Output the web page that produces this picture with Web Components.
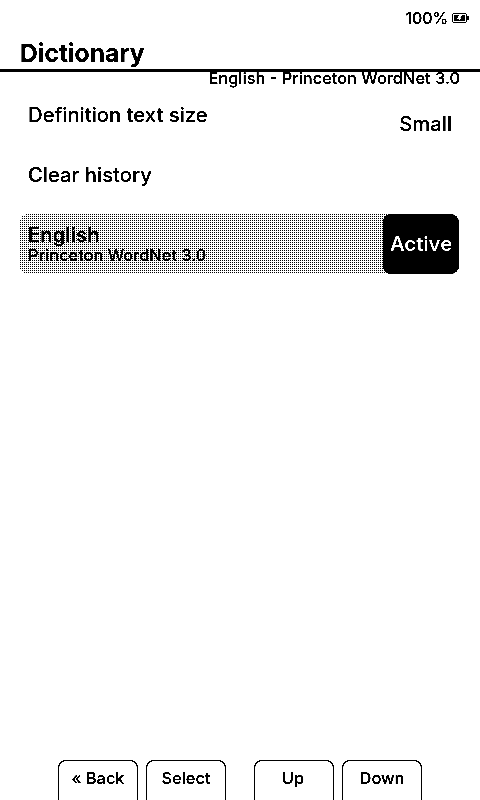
<!DOCTYPE html>
<html>
<head>
<meta charset="utf-8">
<title>Dictionary</title>
<style>
  html, body { margin: 0; padding: 0; background: #fff; }
  body { font-family: Inter, "Liberation Sans", sans-serif; font-weight: 500; color: #000; filter: grayscale(1) brightness(.8) contrast(10); }
</style>
</head>
<body>
<reader-screen>
  <status-bar slot="status" level="100%"></status-bar>
  <screen-header slot="header" title="Dictionary" subtitle="English - Princeton WordNet 3.0"></screen-header>
  <setting-row label="Definition text size" value="Small"></setting-row>
  <setting-row label="Clear history"></setting-row>
  <dict-row name="English" source="Princeton WordNet 3.0" state="Active"></dict-row>
  <hint-bar slot="hints"></hint-bar>
</reader-screen>

<script>
customElements.define('reader-screen', class extends HTMLElement {
  constructor() {
    super();
    const shadowRoot = this.attachShadow({ mode: 'open' });
    shadowRoot.innerHTML = `
      <style>
        :host {
          display: flex;
          flex-direction: column;
          width: 480px;
          height: 800px;
          overflow: hidden;
        }
        main {
          flex: 1;
          display: flex;
          flex-direction: column;
        }
      </style>
      <slot name="status"></slot>
      <slot name="header"></slot>
      <main><slot></slot></main>
      <slot name="hints"></slot>
    `;
  }
});

customElements.define('status-bar', class extends HTMLElement {
  constructor() {
    super();
    const shadowRoot = this.attachShadow({ mode: 'open' });
    shadowRoot.innerHTML = `
      <style>
        :host {
          display: flex;
          justify-content: flex-end;
          align-items: center;
          gap: 4px;
          height: 20px;
          padding: 8px 11px 0 0;
          font-size: 16px;
          letter-spacing: -0.2px;
        }
        svg { display: block; }
      </style>
      <span>${this.getAttribute('level')}</span>
      <svg width="17" height="10" viewBox="0 0 17 10">
        <rect x="0.5" y="0.5" width="14" height="9" rx="1" fill="#fff" stroke="#000"/>
        <rect x="2" y="2" width="11" height="6" fill="#000"/>
        <path d="M15 3h1.5v4H15z" fill="#000"/>
        <path d="M11 2H7L5 6h2L6 8l4-3.5H8z" fill="#fff"/>
      </svg>
    `;
  }
});

customElements.define('screen-header', class extends HTMLElement {
  constructor() {
    super();
    const shadowRoot = this.attachShadow({ mode: 'open' });
    shadowRoot.innerHTML = `
      <style>
        :host { display: block; }
        h1 {
          margin: 0;
          padding: 9px 0 0 20px;
          height: 32px;
          font-size: 24.6px;
          line-height: 33px;
          font-weight: 700;
          border-bottom: 3px solid #000;
        }
        p {
          margin: 0;
          padding-right: 20px;
          height: 17px;
          text-align: right;
          font-size: 16.4px;
          line-height: 13px;
        }
      </style>
      <h1>${this.getAttribute('title')}</h1>
      <p>${this.getAttribute('subtitle')}</p>
    `;
  }
});

customElements.define('setting-row', class extends HTMLElement {
  constructor() {
    super();
    const shadowRoot = this.attachShadow({ mode: 'open' });
    const value = this.getAttribute('value');
    shadowRoot.innerHTML = `
      <style>
        :host {
          display: flex;
          justify-content: space-between;
          height: 60px;
          padding: 0 28px;
          font-size: 20.3px;
        }
        span { display: block; line-height: 32px; padding-top: 10px; }
        .value { padding-top: 19px; }
      </style>
      <span>${this.getAttribute('label')}</span>
      ${value ? `<span class="value">${value}</span>` : ''}
    `;
  }
});

customElements.define('dict-row', class extends HTMLElement {
  constructor() {
    super();
    const shadowRoot = this.attachShadow({ mode: 'open' });
    shadowRoot.innerHTML = `
      <style>
        :host {
          display: flex;
          align-items: stretch;
          height: 60px;
          margin: 5px 21px 0 20px;
          border-radius: 8px;
          overflow: hidden;
          background: conic-gradient(#000 25%, #fff 0) -1px 0 / 2px 2px;
        }
        .text { flex: 1; padding: 10px 0 0 8px; }
        .name { font-size: 20.3px; line-height: 22px; font-weight: 600; }
        .source { font-size: 16.4px; line-height: 18px; }
        .state {
          display: flex;
          align-items: center;
          justify-content: center;
          width: 76px;
          padding-bottom: 2px;
          box-sizing: border-box;
          background: #000;
          color: #fff;
          font-size: 20.3px;
          font-weight: 600;
          border-radius: 8px;
        }
      </style>
      <div class="text">
        <div class="name">${this.getAttribute('name')}</div>
        <div class="source">${this.getAttribute('source')}</div>
      </div>
      <div class="state">${this.getAttribute('state')}</div>
    `;
  }
});

customElements.define('hint-bar', class extends HTMLElement {
  constructor() {
    super();
    const shadowRoot = this.attachShadow({ mode: 'open' });
    shadowRoot.innerHTML = `
      <style>
        :host {
          display: flex;
          height: 40px;
          padding-left: 58px;
          gap: 8px;
        }
        div {
          width: 78px;
          text-align: center;
          border: 1px solid #000;
          border-bottom: 0;
          border-radius: 8px 8px 0 0;
          font-size: 16.4px;
          line-height: 34px;
        }
        .gap { margin-left: 20px; }
        .up { text-indent: -2px; }
      </style>
      <div>« Back</div>
      <div>Select</div>
      <div class="gap up">Up</div>
      <div>Down</div>
    `;
  }
});
</script>
</body>
</html>
